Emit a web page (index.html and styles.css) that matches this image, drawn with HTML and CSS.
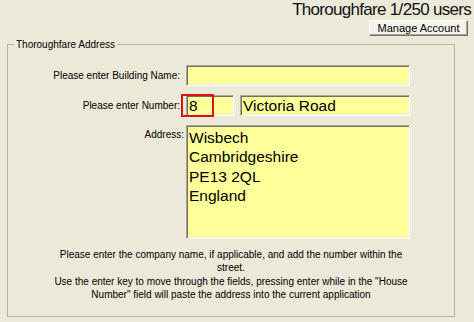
FILE: index.html
```html
<!DOCTYPE html>
<html>
<head>
<meta charset="utf-8">
<title>Thoroughfare</title>
<link rel="stylesheet" href="styles.css">
</head>
<body>
<div class="header">
  <div class="title">Thoroughfare 1/250 users</div>
  <button class="btn" type="button">Manage Account</button>
</div>
<div class="group">
  <div class="group-title">Thoroughfare Address</div>
  <div class="form">
    <label class="lbl">Please enter Building Name:</label>
    <input class="field" type="text" value="">
    <label class="lbl">Please enter Number:</label>
    <div class="pair">
      <div class="num-wrap">
        <input class="field num" type="text" value="8">
        <span class="mark"></span>
      </div>
      <input class="field street" type="text" value="Victoria Road">
    </div>
    <label class="lbl lbl-top">Address:</label>
    <textarea class="field area">Wisbech
Cambridgeshire
PE13 2QL
England</textarea>
  </div>
  <div class="help">
    <p>Please enter the company name, if applicable, and add the number within the street.</p>
    <p>Use the enter key to move through the fields, pressing enter while in the "House Number" field will paste the address into the current application</p>
  </div>
</div>
</body>
</html>
```

FILE: styles.css
```css
html, body {
  margin: 0;
  padding: 0;
}

body {
  background: #ece9d8;
  font-family: "Liberation Sans", Arial, sans-serif;
  font-size: 10px;
  color: #000;
  width: 474px;
}

.header {
  display: flex;
  flex-direction: column;
  align-items: flex-end;
}

.title {
  font-size: 17px;
  line-height: 20px;
  height: 20px;
  letter-spacing: -0.7px;
  margin-right: 3px;
  color: #111;
}

.btn {
  box-sizing: border-box;
  width: 99px;
  height: 16px;
  margin: 0 6px 0 0;
  padding: 0;
  font-family: "Liberation Sans", Arial, sans-serif;
  font-size: 11px;
  line-height: 12px;
  color: #000;
  background: #f3f2ec;
  border: 1px solid;
  border-color: #ffffff #716f64 #716f64 #ffffff;
  box-shadow: inset -1px -1px 0 #aca899;
}

.group {
  position: relative;
  box-sizing: border-box;
  width: 448px;
  margin: 8px 0 0 7px;
  padding: 20px 0 15px 0;
  border: 1px solid #b6b3a1;
}

.group-title {
  position: absolute;
  left: 6px;
  top: -7px;
  padding: 0 2px;
  font-size: 10px;
  line-height: 13px;
  background: #ece9d8;
}

.form {
  display: grid;
  grid-template-columns: 172px 224px;
  column-gap: 6px;
  row-gap: 9px;
  align-items: center;
}

.lbl {
  text-align: right;
  line-height: 13px;
  white-space: nowrap;
}

.lbl-top {
  align-self: start;
  margin-top: 3px;
  margin-right: -4px;
}

.field {
  box-sizing: border-box;
  display: block;
  height: 21px;
  width: 100%;
  min-width: 0;
  margin: 0;
  padding: 0 0 0 2px;
  background: #ffff99;
  border: 1px solid;
  border-color: #aca899 #ffffff #ffffff #aca899;
  box-shadow: inset 1px 1px 0 #716f64, inset -1px -1px 0 #f1efe2;
  font-family: "Liberation Sans", Arial, sans-serif;
  font-size: 15.5px;
  color: #000;
  outline: none;
}

.pair {
  display: flex;
  gap: 6px;
  min-width: 0;
}

.num-wrap {
  position: relative;
  width: 48px;
  flex: none;
}

.num {
  width: 48px;
}

.mark {
  position: absolute;
  left: -5px;
  top: -1px;
  width: 33px;
  height: 23px;
  box-sizing: border-box;
  border: 2px solid #e01010;
}

.street {
  flex: none;
  width: 170px;
}

.area {
  height: 114px;
  padding: 2px 1px 0 2px;
  line-height: 19.3px;
  resize: none;
  overflow: hidden;
}

.help {
  width: 372px;
  margin: 9px auto 0;
  text-align: center;
  line-height: 13px;
}

.help p {
  margin: 0;
}

.help p + p {
  margin-top: 1px;
}
```
